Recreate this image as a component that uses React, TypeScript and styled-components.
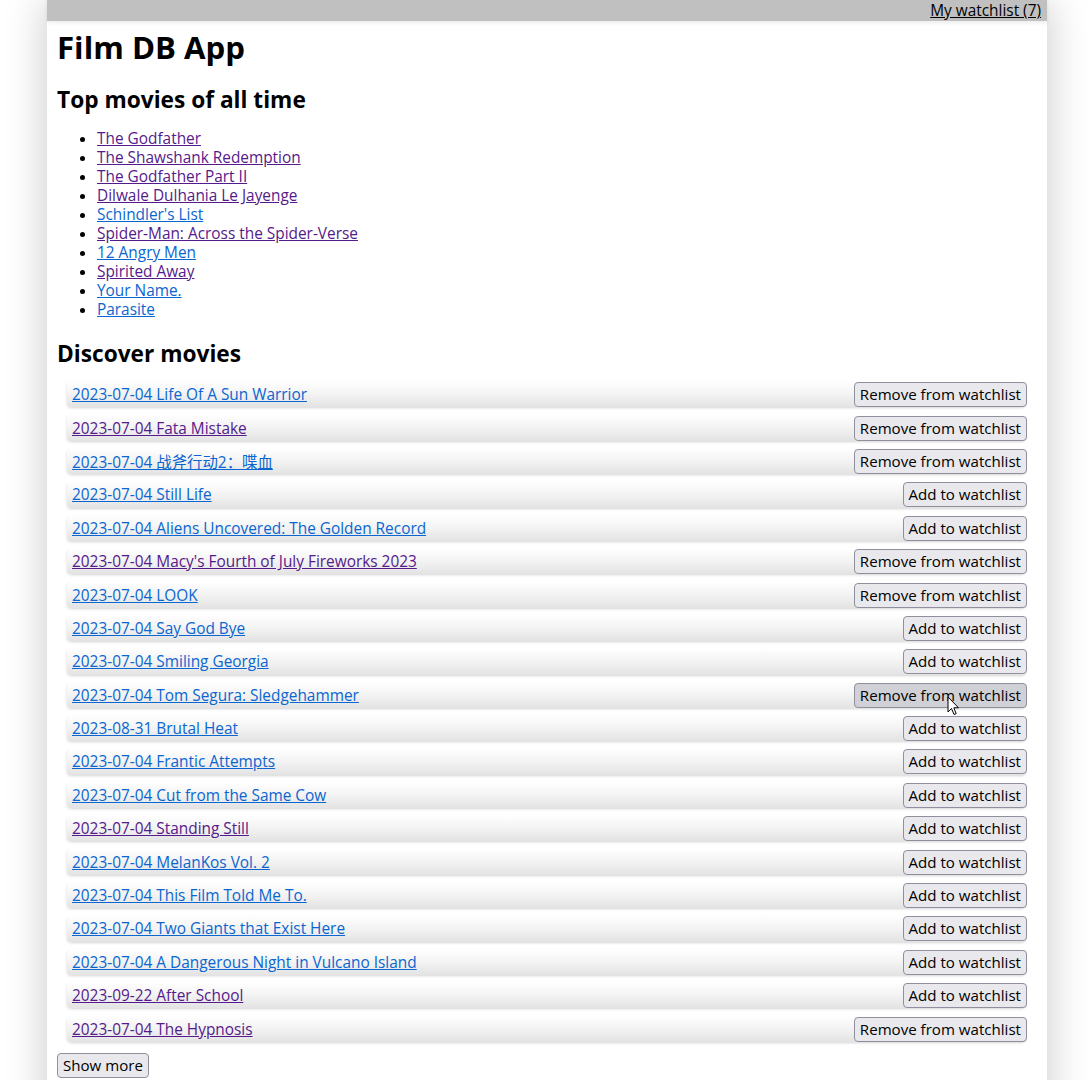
import React from "react";
import styled, { createGlobalStyle } from "styled-components";

const Global = createGlobalStyle`
  html, body { margin: 0; padding: 0; background: #fff; }
  body { font-family: "Open Sans", "Noto Sans CJK SC", sans-serif; color: #000; padding-left: 5px; }
  * { box-sizing: border-box; }
`;

const Page = styled.div`
  width: 1000px;
  margin: 0 auto;
  background: #fff;
  box-shadow: 0 0 40px rgba(0, 0, 0, 0.22);
  min-height: 1200px;
`;

const TopBar = styled.div`
  height: 21px;
  background: #c0c0c0;
  display: flex;
  justify-content: flex-end;
  align-items: center;
  padding-right: 6px;
  box-shadow: 0 2px 4px rgba(0, 0, 0, 0.08);
`;

const BarLink = styled.a`
  color: #000;
  font-size: 15.4px;
  line-height: 21px;
  text-decoration: underline;
`;

const Main = styled.div`
  padding: 0 10px 20px;
`;

const Title = styled.h1`
  margin: 6px 0 0;
  font-size: 31.2px;
  line-height: 40px;
  font-weight: 700;
`;

const Heading = styled.h2<{ $top: number }>`
  margin: ${(p) => p.$top}px 0 0;
  font-size: 22.7px;
  line-height: 30px;
  font-weight: 700;
`;

const TopList = styled.ul`
  margin: 14px 0 0;
  padding-left: 40px;
  font-size: 15.4px;
  line-height: 19px;
`;

const Link = styled.a<{ $visited?: boolean }>`
  color: ${(p) => (p.$visited ? "#551a8b" : "#0a66d0")};
  text-decoration: underline;
`;

const Rows = styled.div`
  margin: 12px 10px 0;
  display: flex;
  flex-direction: column;
  gap: 6px;
`;

const Row = styled.div`
  height: 27.4px;
  display: flex;
  align-items: center;
  justify-content: space-between;
  padding-left: 5px;
  border-radius: 5px;
  background: linear-gradient(to bottom, #ffffff 0%, #f4f4f4 45%, #e2e2e2 100%);
  box-shadow: -1px 1px 2px rgba(0, 0, 0, 0.08);
  font-size: 15.4px;
`;

const Button = styled.button<{ $hover?: boolean }>`
  position: relative;
  font-family: inherit;
  font-size: 15.1px;
  line-height: 21px;
  height: 25px;
  padding: 0 5px;
  color: #000;
  background: ${(p) => (p.$hover ? "#d0d0d7" : "#e9e9ed")};
  border: 1px solid #8f8f9d;
  border-radius: 4px;
  cursor: default;
`;

const MoreButton = styled(Button)`
  margin-top: 10px;
`;

const Cursor = styled.svg`
  position: absolute;
  left: 92px;
  top: 12px;
  pointer-events: none;
`;

const top = [
  ["The Godfather", true],
  ["The Shawshank Redemption", true],
  ["The Godfather Part II", true],
  ["Dilwale Dulhania Le Jayenge", true],
  ["Schindler's List", false],
  ["Spider-Man: Across the Spider-Verse", true],
  ["12 Angry Men", false],
  ["Spirited Away", true],
  ["Your Name.", false],
  ["Parasite", false],
] as const;

type M = { t: string; v: boolean; w: boolean; h?: boolean };
const movies: M[] = [
  { t: "2023-07-04 Life Of A Sun Warrior", v: false, w: true },
  { t: "2023-07-04 Fata Mistake", v: true, w: true },
  { t: "2023-07-04 战斧行动2：喋血", v: false, w: true },
  { t: "2023-07-04 Still Life", v: false, w: false },
  { t: "2023-07-04 Aliens Uncovered: The Golden Record", v: false, w: false },
  { t: "2023-07-04 Macy's Fourth of July Fireworks 2023", v: true, w: true },
  { t: "2023-07-04 LOOK", v: false, w: true },
  { t: "2023-07-04 Say God Bye", v: false, w: false },
  { t: "2023-07-04 Smiling Georgia", v: false, w: false },
  { t: "2023-07-04 Tom Segura: Sledgehammer", v: false, w: true, h: true },
  { t: "2023-08-31 Brutal Heat", v: false, w: false },
  { t: "2023-07-04 Frantic Attempts", v: false, w: false },
  { t: "2023-07-04 Cut from the Same Cow", v: false, w: false },
  { t: "2023-07-04 Standing Still", v: true, w: false },
  { t: "2023-07-04 MelanKos Vol. 2", v: false, w: false },
  { t: "2023-07-04 This Film Told Me To.", v: false, w: false },
  { t: "2023-07-04 Two Giants that Exist Here", v: false, w: false },
  { t: "2023-07-04 A Dangerous Night in Vulcano Island", v: false, w: false },
  { t: "2023-09-22 After School", v: true, w: false },
  { t: "2023-07-04 The Hypnosis", v: true, w: true },
];

export default function App() {
  return (
    <>
      <Global />
      <Page>
        <TopBar>
          <BarLink href="#">My watchlist (7)</BarLink>
        </TopBar>
        <Main>
          <Title>Film DB App</Title>
          <Heading $top={18}>Top movies of all time</Heading>
          <TopList>
            {top.map(([t, v]) => (
              <li key={t}>
                <Link href="#" $visited={v}>
                  {t}
                </Link>
              </li>
            ))}
          </TopList>
          <Heading $top={20}>Discover movies</Heading>
          <Rows>
            {movies.map((m) => (
              <Row key={m.t}>
                <Link href="#" $visited={m.v}>
                  {m.t}
                </Link>
                <Button $hover={m.h}>
                  {m.w ? "Remove from watchlist" : "Add to watchlist"}
                  {m.h && (
                    <Cursor width="13" height="20" viewBox="0 0 13 20">
                      <path
                        d="M1 1 L1 16 L4.5 12.5 L7 18.5 L9.2 17.6 L6.8 11.8 L11.5 11.8 Z"
                        fill="#fff"
                        stroke="#000"
                        strokeWidth="1"
                        strokeLinejoin="round"
                      />
                    </Cursor>
                  )}
                </Button>
              </Row>
            ))}
          </Rows>
          <MoreButton>Show more</MoreButton>
        </Main>
      </Page>
    </>
  );
}
